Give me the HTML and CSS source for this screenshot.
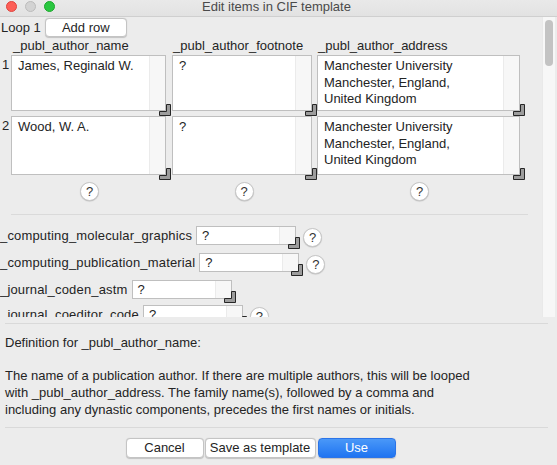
FILE: index.html
```html
<!DOCTYPE html>
<html>
<head>
<meta charset="utf-8">
<title>Edit items in CIF template</title>
<link rel="stylesheet" href="styles.css">
</head>
<body>
<div class="window">
  <div class="titlebar">
    <div class="lights">
      <span class="light red"></span>
      <span class="light gray"></span>
      <span class="light green"></span>
    </div>
    <div class="title">Edit items in CIF template</div>
  </div>

  <div class="scroll-view">
    <div class="content">
      <div class="loop-head">
        <span class="loop-label">Loop 1</span>
        <button class="btn add-row">Add row</button>
      </div>

      <div class="loop-grid">
        <div></div>
        <div class="col-head h1">_publ_author_name</div>
        <div class="col-head h2">_publ_author_footnote</div>
        <div class="col-head h3">_publ_author_address</div>

        <div class="row-label">1</div>
        <div class="cell c1">
          <div class="box r1"><div class="box-text">James, Reginald W.</div><div class="track"></div></div>
          <svg class="grip" width="12" height="12" viewBox="0 0 12 12"><path d="M0.5 7.5H7.5V0.5H11.5V11.5H0.5Z"/></svg>
        </div>
        <div class="cell c2">
          <div class="box r1"><div class="box-text">?</div><div class="track"></div></div>
          <svg class="grip" width="12" height="12" viewBox="0 0 12 12"><path d="M0.5 7.5H7.5V0.5H11.5V11.5H0.5Z"/></svg>
        </div>
        <div class="cell c3">
          <div class="box r1"><div class="box-text">Manchester University<br>Manchester, England,<br>United Kingdom</div><div class="track"></div></div>
          <svg class="grip" width="12" height="12" viewBox="0 0 12 12"><path d="M0.5 7.5H7.5V0.5H11.5V11.5H0.5Z"/></svg>
        </div>

        <div class="row-label">2</div>
        <div class="cell c1">
          <div class="box r2"><div class="box-text">Wood, W. A.</div><div class="track"></div></div>
          <svg class="grip" width="12" height="12" viewBox="0 0 12 12"><path d="M0.5 7.5H7.5V0.5H11.5V11.5H0.5Z"/></svg>
        </div>
        <div class="cell c2">
          <div class="box r2"><div class="box-text">?</div><div class="track"></div></div>
          <svg class="grip" width="12" height="12" viewBox="0 0 12 12"><path d="M0.5 7.5H7.5V0.5H11.5V11.5H0.5Z"/></svg>
        </div>
        <div class="cell c3">
          <div class="box r2"><div class="box-text">Manchester University<br>Manchester, England,<br>United Kingdom</div><div class="track"></div></div>
          <svg class="grip" width="12" height="12" viewBox="0 0 12 12"><path d="M0.5 7.5H7.5V0.5H11.5V11.5H0.5Z"/></svg>
        </div>

        <div></div>
        <div class="help-slot c1"><span class="help">?</span></div>
        <div class="help-slot c2"><span class="help">?</span></div>
        <div class="help-slot c3"><span class="help">?</span></div>
      </div>

      <div class="sep-inner"></div>

      <div class="fields">
        <div class="field">
          <span class="field-label">_computing_molecular_graphics</span>
          <div class="field-cell">
            <div class="field-box"><span class="field-text">?</span><span class="track"></span></div>
            <svg class="grip" width="12" height="12" viewBox="0 0 12 12"><path d="M0.5 7.5H7.5V0.5H11.5V11.5H0.5Z"/></svg>
          </div>
          <span class="help inline">?</span>
        </div>
        <div class="field">
          <span class="field-label">_computing_publication_material</span>
          <div class="field-cell">
            <div class="field-box"><span class="field-text">?</span><span class="track"></span></div>
            <svg class="grip" width="12" height="12" viewBox="0 0 12 12"><path d="M0.5 7.5H7.5V0.5H11.5V11.5H0.5Z"/></svg>
          </div>
          <span class="help inline">?</span>
        </div>
        <div class="field">
          <span class="field-label">_journal_coden_astm</span>
          <div class="field-cell">
            <div class="field-box"><span class="field-text">?</span><span class="track"></span></div>
            <svg class="grip" width="12" height="12" viewBox="0 0 12 12"><path d="M0.5 7.5H7.5V0.5H11.5V11.5H0.5Z"/></svg>
          </div>
        </div>
        <div class="field short">
          <span class="field-label">_journal_coeditor_code</span>
          <div class="field-cell">
            <div class="field-box"><span class="field-text">?</span><span class="track"></span></div>
            <svg class="grip" width="12" height="12" viewBox="0 0 12 12"><path d="M0.5 7.5H7.5V0.5H11.5V11.5H0.5Z"/></svg>
          </div>
          <span class="help inline">?</span>
        </div>
      </div>
    </div>
    <div class="vscroll"><div class="thumb"></div></div>
  </div>

  <div class="sep"></div>

  <div class="definition">
    <p class="def-title">Definition for _publ_author_name:</p>
    <p class="def-body">The name of a publication author. If there are multiple authors, this will be looped<br>with _publ_author_address. The family name(s), followed by a comma and<br>including any dynastic components, precedes the first names or initials.</p>
  </div>

  <div class="sep"></div>

  <div class="buttons">
    <button class="btn cancel">Cancel</button>
    <button class="btn save">Save as template</button>
    <button class="btn use">Use</button>
  </div>
</div>
</body>
</html>
```

FILE: styles.css
```css
html, body {
  margin: 0;
  padding: 0;
  background: #ececec;
}

body {
  width: 557px;
  height: 465px;
  overflow: hidden;
  font-family: "Liberation Sans", Arial, sans-serif;
  font-size: 13px;
  color: #242424;
}

.window {
  width: 557px;
  height: 465px;
  display: flex;
  flex-direction: column;
}

/* Title bar */
.titlebar {
  height: 16px;
  flex: none;
  background: linear-gradient(#e9e9e9, #e2e2e2);
  border-bottom: 1px solid #cfcfcf;
  display: flex;
  align-items: center;
  position: relative;
}

.lights {
  display: flex;
  gap: 8px;
  padding-left: 6px;
  margin-top: -4px;
}

.light {
  width: 11px;
  height: 11px;
  border-radius: 50%;
  box-sizing: border-box;
  display: block;
}

.light.red { background: #fd5f57; border: 0.5px solid #e0443e; }
.light.gray { background: #d3d3d3; border: 0.5px solid #bcbcbc; }
.light.green { background: #2ac740; border: 0.5px solid #1ca82d; }

.title {
  position: absolute;
  left: 0;
  right: 0;
  top: 0;
  text-align: center;
  line-height: 14px;
  color: #4a4a4a;
  padding-right: 4px;
}

/* Scroll area */
.scroll-view {
  height: 300px;
  flex: none;
  display: flex;
  width: 555px;
}

.content {
  width: 542px;
  height: 300px;
  overflow: hidden;
}

.vscroll {
  width: 13px;
  height: 300px;
  background: #f7f7f7;
  box-sizing: border-box;
  border-left: 1px solid #e9e9e9;
  padding: 3px 0 0 2px;
}

.thumb {
  width: 8px;
  height: 46px;
  border-radius: 4px;
  background: #c3c3c3;
}

.loop-head {
  display: flex;
  align-items: center;
  height: 19px;
  margin-top: 1px;
  padding-left: 1px;
}

.loop-label {
  line-height: 19px;
}

.btn {
  font-family: "Liberation Sans", Arial, sans-serif;
  font-size: 13px;
  color: #242424;
  background: #ffffff;
  border: 0.5px solid #c4c4c4;
  border-radius: 4px;
  box-shadow: 0 0.5px 1px rgba(0, 0, 0, 0.18);
  height: 20px;
  padding: 0;
  box-sizing: border-box;
  line-height: 18px;
}

.add-row {
  width: 82px;
  height: 19px;
  margin-left: 4px;
}

/* Loop grid */
.loop-grid {
  display: grid;
  grid-template-columns: 11px 160px 146px 208px;
}

.col-head {
  height: 18px;
  line-height: 18px;
  white-space: nowrap;
}

.col-head.h1 { padding-left: 2px; }
.col-head.h2 { padding-left: 2px; }
.col-head.h3 { padding-left: 1px; }

.row-label {
  padding-left: 2px;
  padding-top: 2px;
  line-height: 16px;
}

.cell {
  position: relative;
  padding: 0 5px 5px 0;
}

.cell.c2 { padding-left: 1px; }

.box {
  background: #ffffff;
  border: 1px solid #bfbfbf;
  box-sizing: border-box;
  display: flex;
}

.box.r1 { height: 56px; }
.box.r2 { height: 59px; }

.box-text {
  flex: 1;
  padding: 2px 0 0 6px;
  line-height: 16.5px;
  white-space: nowrap;
  overflow: hidden;
}

.track {
  width: 15px;
  flex: none;
  background: #f7f7f7;
  border-left: 1px solid #ebebeb;
}

.grip {
  position: absolute;
  right: 0;
  bottom: 0;
  display: block;
}

.grip path {
  fill: #9c9c9c;
  stroke: #262626;
  stroke-width: 1;
}

.help-slot {
  display: flex;
  justify-content: center;
  padding: 2px 3px 0 0;
}

.help-slot.c2 { padding-left: 3px; }

.help {
  width: 19px;
  height: 19px;
  box-sizing: border-box;
  border-radius: 50%;
  background: #ffffff;
  border: 0.5px solid #c6c6c6;
  box-shadow: 0 0.5px 1px rgba(0, 0, 0, 0.2);
  display: flex;
  align-items: center;
  justify-content: center;
  font-size: 13px;
  color: #333333;
  flex: none;
}

.sep-inner {
  height: 1px;
  background: #dadada;
  margin: 13px 14px 0 11px;
}

/* Fields */
.fields {
  display: flex;
  flex-direction: column;
  gap: 4px;
  margin-top: 11px;
}

.field {
  display: flex;
  align-items: flex-start;
}

.field.short {
  margin-top: -2px;
}

.field-label {
  line-height: 19px;
  white-space: nowrap;
  margin-right: 4px;
  letter-spacing: 0.17px;
}

.field-cell {
  position: relative;
  padding: 0 4px 4px 0;
}

.field-box {
  width: 100px;
  height: 19px;
  box-sizing: border-box;
  background: #ffffff;
  border: 1px solid #bfbfbf;
  display: flex;
}

.field-text {
  flex: 1;
  padding-left: 5px;
  line-height: 17px;
}

.help.inline {
  margin-left: 3px;
  margin-top: 2px;
}

/* Separators */
.sep {
  height: 1px;
  flex: none;
  background: #d9d9d9;
  margin: 0 9px 0 5px;
}

.scroll-view + .sep {
  margin-top: 6px;
}

/* Definition */
.definition {
  height: 103px;
  flex: none;
  box-sizing: border-box;
  padding: 11px 0 0 5px;
  line-height: 16.7px;
  white-space: nowrap;
}

.definition p {
  margin: 0 0 16.7px 0;
}

/* Buttons */
.buttons {
  display: flex;
  justify-content: center;
  padding: 10px 36px 0 0;
  gap: 1px;
}

.cancel { width: 78px; }
.save { width: 111px; margin-right: 1px; }

.use {
  width: 78px;
  color: #ffffff;
  border: 0.5px solid #2b74e8;
  background: linear-gradient(#4a98f8, #1f74f1);
}
```
